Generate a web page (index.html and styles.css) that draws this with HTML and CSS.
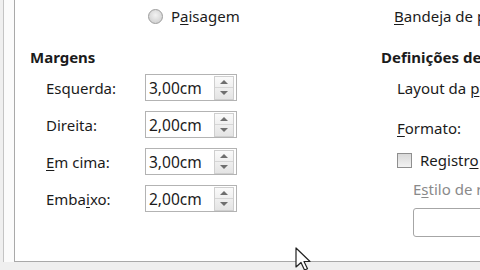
FILE: index.html
```html
<!DOCTYPE html>
<html lang="pt">
<head>
    <meta charset="UTF-8">
    <title>Estilo de página</title>
    <link rel="stylesheet" href="styles.css">
</head>
<body>

<div class="tab">
    <div class="frame">
        <div class="top-row">
            <label class="radio-line"><span class="radio"></span><span>P<u>a</u>isagem</span></label>
            <span class="tray"><u>B</u>andeja de papel:</span>
        </div>

        <div class="sections">
            <section class="margins">
                <h2>Margens</h2>
                <div class="field">
                    <span class="label">Esquerda:</span>
                    <div class="spin"><span class="value">3,00cm</span><span class="arrows"><i class="up"></i><i class="down"></i></span></div>
                </div>
                <div class="field">
                    <span class="label">Direita:</span>
                    <div class="spin"><span class="value">2,00cm</span><span class="arrows"><i class="up"></i><i class="down"></i></span></div>
                </div>
                <div class="field">
                    <span class="label"><u>E</u>m cima:</span>
                    <div class="spin"><span class="value">3,00cm</span><span class="arrows"><i class="up"></i><i class="down"></i></span></div>
                </div>
                <div class="field">
                    <span class="label">Emba<u>i</u>xo:</span>
                    <div class="spin"><span class="value">2,00cm</span><span class="arrows"><i class="up"></i><i class="down"></i></span></div>
                </div>
            </section>

            <section class="layout">
                <h2>Definições de layout</h2>
                <div class="opt">Layout da <u>p</u>ágina:</div>
                <div class="opt"><u>F</u>ormato:</div>
                <label class="opt check-line"><span class="check"></span><span>Registr<u>o</u> exato</span></label>
                <div class="sub muted">E<u>s</u>tilo de referência:</div>
                <div class="sub combo"></div>
            </section>
        </div>
    </div>
</div>

<!-- mouse pointer over the dialog -->
<svg class="cursor" width="22" height="26" viewBox="0 0 22 26">
    <path d="M1 1 L1 20 L6 15.5 L9.5 23 L12.5 21.7 L9 14.5 L15 14.5 Z" fill="#fff" stroke="#222" stroke-width="1.2" stroke-linejoin="round"/>
</svg>

</body>
</html>
```

FILE: styles.css
```css
/* page style dialog, zoomed */
body {
    margin: 0;
    width: 480px;
    height: 270px;
    overflow: hidden;
    position: relative;
    background-color: #efefef;
    font-family: "Noto Sans", "Open Sans", sans-serif;
    font-size: 15px;
    color: #1b1b1b;
}

u {
    text-decoration-thickness: 1px;
    text-underline-offset: 2px;
}

.tab {
    margin-left: 3px;
    height: 262px;
    border-left: 1px solid #c4c4c4;
    background-color: #fbfbfb;
}

.frame {
    margin-left: 10px;
    height: 261px;
    border-left: 1px solid #a9a9a9;
    border-bottom: 1px solid #a9a9a9;
    background-color: #fff;
    overflow: hidden;
    white-space: nowrap;
}

.top-row {
    display: flex;
    height: 32px;
    align-items: center;
}

.radio-line {
    display: flex;
    flex-shrink: 0;
    align-items: center;
    gap: 8px;
    margin-left: 133px;
    width: 246px;
}

.radio {
    width: 13px;
    height: 13px;
    border: 1px solid #9c9c9c;
    border-radius: 50%;
    background: radial-gradient(circle at 50% 40%, #f2f2f2, #c9c9c9);
}

.sections {
    display: flex;
    padding-top: 14px;
}

h2 {
    margin: 0 0 6px;
    font-size: 15px;
    font-weight: bold;
    line-height: 22px;
}

.margins {
    flex-shrink: 0;
    width: 351px;
    padding-left: 15px;
}

.field {
    display: flex;
    align-items: center;
    margin-bottom: 10px;
}

.label {
    width: 99px;
    padding-left: 16px;
}

.spin {
    display: flex;
    align-items: center;
    justify-content: space-between;
    width: 85px;
    height: 25px;
    border: 1px solid #b3b3b3;
    padding: 0 2px 0 3px;
}

.value {
    font-size: 15.5px;
}

.arrows {
    display: flex;
    flex-direction: column;
    width: 18px;
    height: 22px;
    border: 1px solid #cfcfcf;
    background: linear-gradient(#fafafa, #e4e4e4);
}

.arrows i {
    flex: 1;
    position: relative;
}

.arrows .up {
    border-bottom: 1px solid #d6d6d6;
}

.arrows i::after {
    content: "";
    position: absolute;
    left: 5px;
    top: 3px;
    border-left: 4px solid transparent;
    border-right: 4px solid transparent;
}

.arrows .up::after {
    border-bottom: 4px solid #6f6f6f;
}

.arrows .down::after {
    border-top: 4px solid #6f6f6f;
}

.layout {
    display: flex;
    flex-direction: column;
}

.opt {
    margin-left: 16px;
    line-height: 22px;
    margin-top: 3px;
}

.opt + .opt {
    margin-top: 18px;
}

.check-line {
    display: flex;
    align-items: center;
    gap: 8px;
    margin-top: 10px !important;
}

.check {
    width: 13px;
    height: 13px;
    border: 1px solid #8f8f8f;
    background: linear-gradient(#d9d9d9, #f2f2f2);
}

.sub {
    margin-left: 32px;
}

.muted {
    color: #8a8a8a;
    margin-top: 7px;
    line-height: 22px;
}

.combo {
    margin-top: 8px;
    width: 120px;
    height: 27px;
    border: 1px solid #a6a6a6;
    border-radius: 3px;
}

.cursor {
    position: absolute;
    left: 295px;
    top: 247px;
}
```
